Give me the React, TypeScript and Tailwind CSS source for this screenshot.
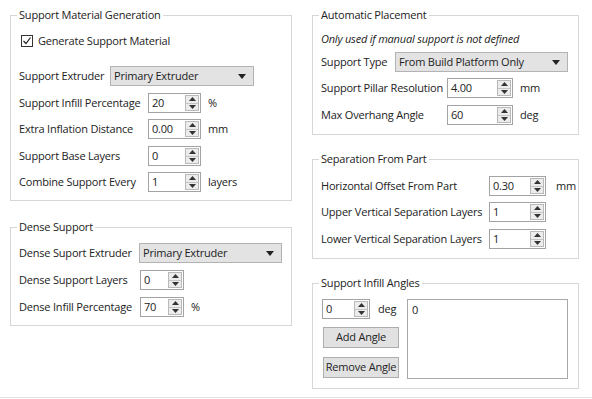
import type { ReactNode } from 'react'

const font = "font-['Open_Sans','Noto_Sans',sans-serif]"

function GroupBox({
  title,
  className,
  children,
}: {
  title: string
  className: string
  children: ReactNode
}) {
  return (
    <div className={`relative border border-[#d7d7d7] ${className}`}>
      <span className="absolute left-[6px] -top-[9px] bg-white px-[2px] leading-[16px]">{title}</span>
      {children}
    </div>
  )
}

function Arrows() {
  return (
    <div className="my-[1px] mr-[1px] w-[14px] flex flex-col border border-[#b9b9b9] bg-[#ececec]">
      <div className="flex-1 flex items-center justify-center border-b border-[#c4c4c4]">
        <svg width="7" height="4" viewBox="0 0 7 4">
          <polygon points="0,4 7,4 3.5,0" fill="#333" />
        </svg>
      </div>
      <div className="flex-1 flex items-center justify-center">
        <svg width="7" height="4" viewBox="0 0 7 4">
          <polygon points="0,0 7,0 3.5,4" fill="#333" />
        </svg>
      </div>
    </div>
  )
}

function Spin({ value, className }: { value: string; className: string }) {
  return (
    <div className={`flex h-[20px] border border-[#a3a3a3] bg-white ${className}`}>
      <span className="flex-1 pl-[3px] leading-[18px]">{value}</span>
      <Arrows />
    </div>
  )
}

function Dropdown({ text, className }: { text: string; className: string }) {
  return (
    <div
      className={`flex items-center justify-between h-[20px] bg-[#e3e3e3] border border-[#b3b3b3] pl-[3px] pr-[7px] ${className}`}
    >
      <span>{text}</span>
      <svg width="8" height="5" viewBox="0 0 8 5">
        <polygon points="0,0 8,0 4,5" fill="#222" />
      </svg>
    </div>
  )
}

function Row({
  label,
  labelW,
  children,
  className = '',
}: {
  label: string
  labelW: string
  children: ReactNode
  className?: string
}) {
  return (
    <div className={`flex items-center h-[20px] ${className}`}>
      <span className={`shrink-0 ${labelW}`}>{label}</span>
      {children}
    </div>
  )
}

export default function App() {
  return (
    <div
      className={`w-[592px] h-[398px] border-b border-[#e3e3e3] bg-white flex gap-[20px] pl-[10px] pt-[15px] text-[11px] tracking-[-0.2px] text-[#222] ${font}`}
    >
      <div className="w-[282px] flex flex-col">
        <GroupBox title="Support Material Generation" className="h-[186px] pt-[15px] pl-[8px]">
          <div className="flex items-center h-[20px] ml-[2px] gap-[5px]">
            <div className="w-[12px] h-[12px] border border-[#333] bg-white flex items-center justify-center">
              <svg width="10" height="10" viewBox="0 0 10 10">
                <polyline points="1.5,5 4,7.5 8.5,1.5" fill="none" stroke="#222" strokeWidth="1.2" />
              </svg>
            </div>
            <span>Generate Support Material</span>
          </div>
          <Row label="Support Extruder" labelW="w-[91px]" className="mt-[15px]">
            <Dropdown text="Primary Extruder" className="w-[144px]" />
          </Row>
          <Row label="Support Infill Percentage" labelW="w-[129px]" className="mt-[7px]">
            <Spin value="20" className="w-[53px]" />
            <span className="ml-[7px]">%</span>
          </Row>
          <Row label="Extra Inflation Distance" labelW="w-[129px]" className="mt-[6px]">
            <Spin value="0.00" className="w-[53px]" />
            <span className="ml-[7px]">mm</span>
          </Row>
          <Row label="Support Base Layers" labelW="w-[129px]" className="mt-[7px]">
            <Spin value="0" className="w-[53px]" />
          </Row>
          <Row label="Combine Support Every" labelW="w-[129px]" className="mt-[6px]">
            <Spin value="1" className="w-[53px]" />
            <span className="ml-[7px]">layers</span>
          </Row>
        </GroupBox>

        <GroupBox title="Dense Support" className="mt-[26px] h-[99px] pt-[15px] pl-[8px]">
          <Row label="Dense Suport Extruder" labelW="w-[120px]">
            <Dropdown text="Primary Extruder" className="w-[143px]" />
          </Row>
          <Row label="Dense Support Layers" labelW="w-[121px]" className="mt-[7px]">
            <Spin value="0" className="w-[44px]" />
          </Row>
          <Row label="Dense Infill Percentage" labelW="w-[121px]" className="mt-[7px]">
            <Spin value="70" className="w-[44px]" />
            <span className="ml-[7px]">%</span>
          </Row>
        </GroupBox>
      </div>

      <div className="w-[267px] flex flex-col">
        <GroupBox title="Automatic Placement" className="h-[120px] pt-[14px] pl-[8px]">
          <div className="h-[18px] leading-[18px] italic">Only used if manual support is not defined</div>
          <Row label="Support Type" labelW="w-[74px]" className="mt-[4px]">
            <Dropdown text="From Build Platform Only" className="w-[173px]" />
          </Row>
          <Row label="Support Pillar Resolution" labelW="w-[126px]" className="mt-[6px]">
            <Spin value="4.00" className="w-[66px]" />
            <span className="ml-[7px]">mm</span>
          </Row>
          <Row label="Max Overhang Angle" labelW="w-[126px]" className="mt-[7px]">
            <Spin value="60" className="w-[66px]" />
            <span className="ml-[7px]">deg</span>
          </Row>
        </GroupBox>

        <GroupBox title="Separation From Part" className="mt-[24px] h-[100px] pt-[16px] pl-[8px]">
          <Row label="Horizontal Offset From Part" labelW="w-[168px]">
            <Spin value="0.30" className="w-[57px]" />
            <span className="ml-[10px]">mm</span>
          </Row>
          <Row label="Upper Vertical Separation Layers" labelW="w-[168px]" className="mt-[6px]">
            <Spin value="1" className="w-[57px]" />
          </Row>
          <Row label="Lower Vertical Separation Layers" labelW="w-[168px]" className="mt-[7px]">
            <Spin value="1" className="w-[57px]" />
          </Row>
        </GroupBox>

        <GroupBox title="Support Infill Angles" className="mt-[24px] h-[106px] pt-[15px] pl-[9px]">
          <div className="flex">
            <div className="w-[85px] flex flex-col">
              <div className="flex items-center h-[20px]">
                <Spin value="0" className="w-[48px]" />
                <span className="ml-[8px]">deg</span>
              </div>
              <button className="mt-[8px] ml-[1px] w-[76px] h-[21px] bg-[#e1e1e1] border border-[#adadad]">
                Add Angle
              </button>
              <button className="mt-[9px] ml-[1px] w-[76px] h-[21px] bg-[#e1e1e1] border border-[#adadad]">
                Remove Angle
              </button>
            </div>
            <div className="w-[161px] h-[80px] border border-[#a8a8a8] bg-white pl-[4px] pt-[2px]">0</div>
          </div>
        </GroupBox>
      </div>
    </div>
  )
}
